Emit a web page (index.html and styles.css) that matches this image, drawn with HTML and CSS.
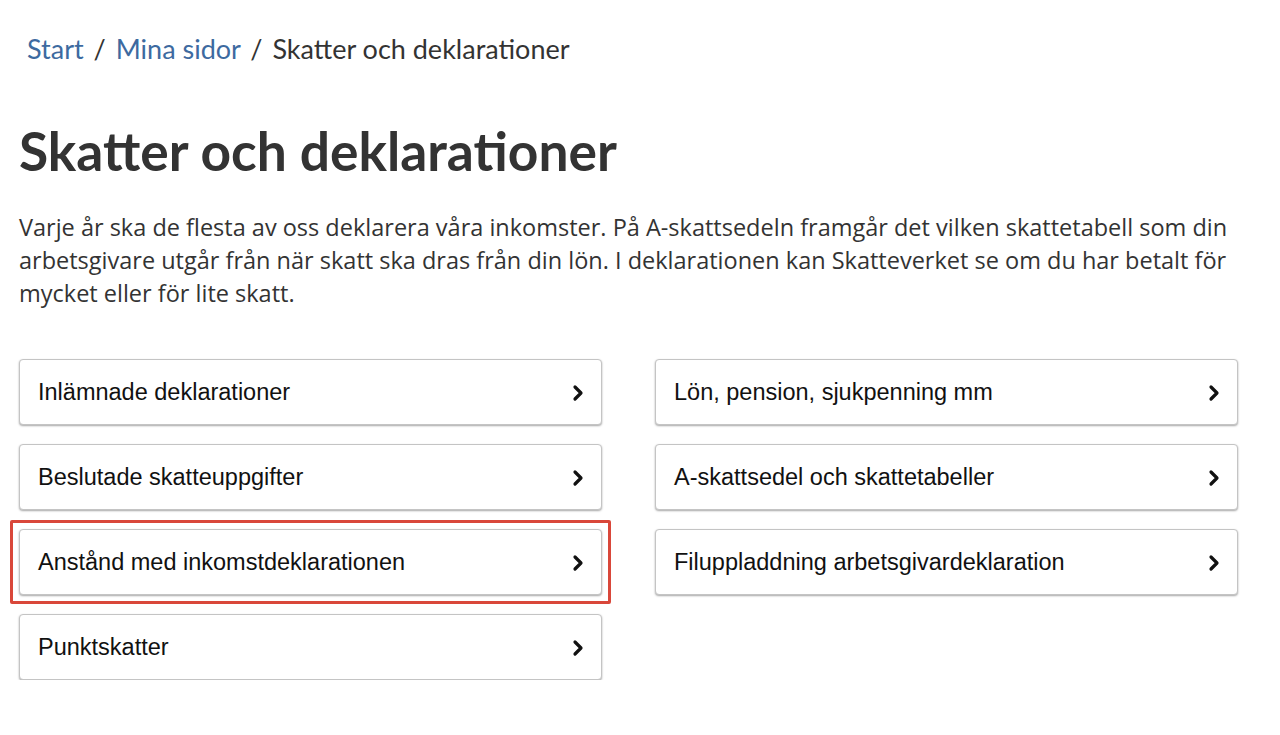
FILE: index.html
```html
<!DOCTYPE html>
<html lang="sv">
<head>
    <meta charset="UTF-8">
    <title>Skatter och deklarationer</title>
    <link rel="stylesheet" href="styles.css">
</head>
<body>
<div class="page">
    <nav class="breadcrumb">
        <a href="#">Start</a>
        <span class="sep">/</span>
        <a href="#">Mina sidor</a>
        <span class="sep">/</span>
        <span class="current">Skatter och deklarationer</span>
    </nav>

    <h1>Skatter och deklarationer</h1>

    <p class="intro">Varje år ska de flesta av oss deklarera våra inkomster. På A-skattsedeln framgår det vilken skattetabell som din arbetsgivare utgår från när skatt ska dras från din lön. I deklarationen kan Skatteverket se om du har betalt för mycket eller för lite skatt.</p>

    <div class="links">
        <div class="column">
            <a class="card" href="#"><span>Inlämnade deklarationer</span>
                <svg class="chevron" viewBox="0 0 12 18"><polyline points="3,3 9,9 3,15"/></svg></a>
            <a class="card" href="#"><span>Beslutade skatteuppgifter</span>
                <svg class="chevron" viewBox="0 0 12 18"><polyline points="3,3 9,9 3,15"/></svg></a>
            <a class="card marked" href="#"><span>Anstånd med inkomstdeklarationen</span>
                <svg class="chevron" viewBox="0 0 12 18"><polyline points="3,3 9,9 3,15"/></svg></a>
            <a class="card" href="#"><span>Punktskatter</span>
                <svg class="chevron" viewBox="0 0 12 18"><polyline points="3,3 9,9 3,15"/></svg></a>
        </div>
        <div class="column">
            <a class="card" href="#"><span>Lön, pension, sjukpenning mm</span>
                <svg class="chevron" viewBox="0 0 12 18"><polyline points="3,3 9,9 3,15"/></svg></a>
            <a class="card" href="#"><span>A-skattsedel och skattetabeller</span>
                <svg class="chevron" viewBox="0 0 12 18"><polyline points="3,3 9,9 3,15"/></svg></a>
            <a class="card" href="#"><span>Filuppladdning arbetsgivardeklaration</span>
                <svg class="chevron" viewBox="0 0 12 18"><polyline points="3,3 9,9 3,15"/></svg></a>
        </div>
    </div>
</div>
</body>
</html>
```

FILE: styles.css
```css
* {
    margin: 0;
    padding: 0;
    box-sizing: border-box;
}

body {
    background: #fff;
    color: #333;
    font-family: Lato, "Open Sans", sans-serif;
}

.page {
    padding: 31px 38px 0 19px;
}

.breadcrumb {
    padding-left: 8px;
    font-size: 27px;
    line-height: 36px;
    color: #333;
}

.breadcrumb a {
    color: #3d6aa0;
    text-decoration: none;
}

.breadcrumb .sep {
    margin: 0 3px;
}

h1 {
    margin-top: 52px;
    font-size: 53.3px;
    font-weight: 700;
    line-height: 1.2;
    color: #333;
}

.intro {
    margin-top: 28px;
    font-family: "Open Sans", sans-serif;
    font-size: 23.5px;
    line-height: 33px;
    color: #333;
}

.links {
    margin-top: 49px;
    display: grid;
    grid-template-columns: 583px 583px;
    column-gap: 53px;
}

.column {
    display: flex;
    flex-direction: column;
    gap: 19px;
}

.card {
    position: relative;
    display: flex;
    align-items: center;
    justify-content: space-between;
    height: 66px;
    padding: 2px 17px 0 18px;
    border: 1px solid #c4c4c4;
    border-radius: 4px;
    box-shadow: 0 1px 2px rgba(0, 0, 0, 0.35);
    background: #fff;
    color: #111;
    font-family: "Liberation Sans", Arial, sans-serif;
    font-size: 23.5px;
    text-decoration: none;
}

/* röd markering ligger ovanpå, runt kortet */
.card.marked::after {
    content: "";
    position: absolute;
    inset: -10px;
    border: 3px solid #d9473a;
    border-radius: 2px;
}

.chevron {
    width: 12px;
    height: 18px;
    fill: none;
    stroke: #111;
    stroke-width: 3.2;
    stroke-linecap: round;
    stroke-linejoin: round;
}
```
